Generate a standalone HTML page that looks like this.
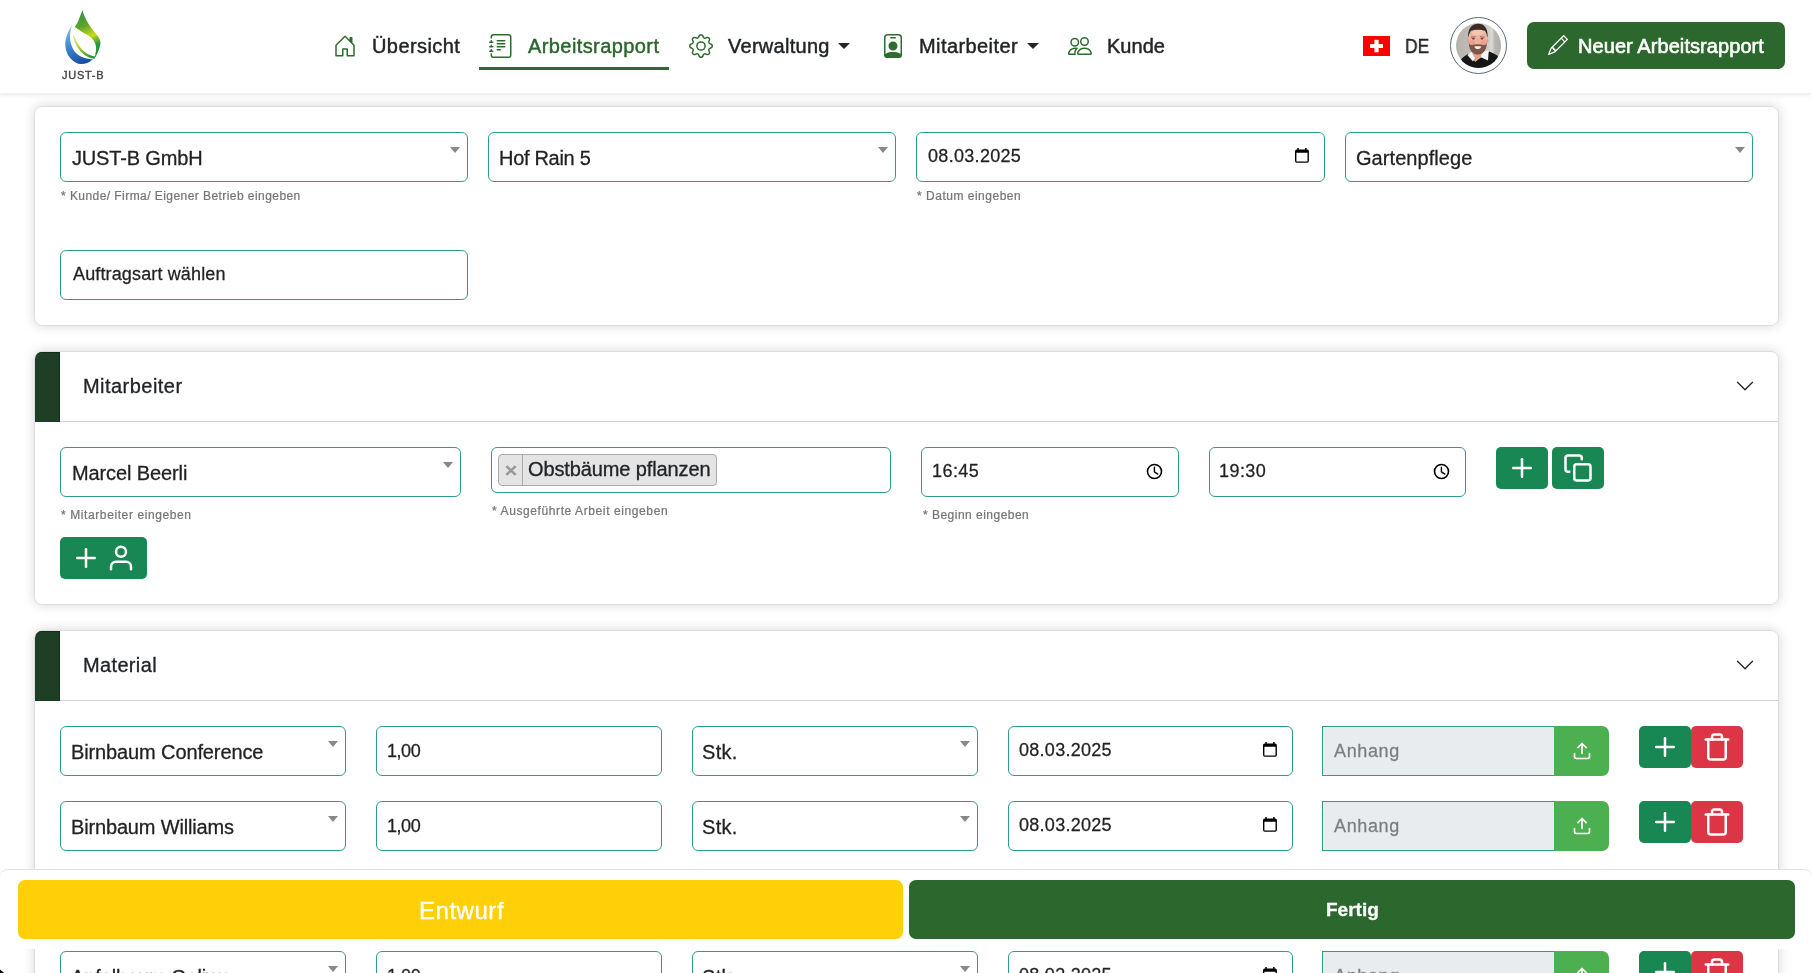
<!DOCTYPE html>
<html lang="de">
<head>
<meta charset="utf-8">
<title>Arbeitsrapport</title>
<style>
*{box-sizing:border-box;margin:0;padding:0}
html,body{width:1812px;height:973px;overflow:hidden;background:#fff}
body{position:relative;font-family:"Liberation Sans",sans-serif;color:#212529;font-size:20px}
.abs{position:absolute}
.t{position:absolute;white-space:nowrap;line-height:1;will-change:transform;-webkit-text-stroke:.016em}
svg{display:block}

/* header */
#hdr{position:absolute;left:0;top:0;width:1812px;height:93px;background:#fff;box-shadow:0 2px 5px rgba(0,0,0,.09);z-index:5}
.nico{position:absolute;top:34px;width:24px;height:24px;fill:#2e6b2e}
.nt{top:36px;font-size:20px;color:#222427;-webkit-text-stroke:.022em}
.caret{position:absolute;top:43px;width:0;height:0;border-top:6px solid #212529;border-left:6px solid transparent;border-right:6px solid transparent}
#ul{position:absolute;left:479px;top:67px;width:190px;height:3px;background:#2e6b2e}
#newbtn{position:absolute;left:1527px;top:22px;width:258px;height:47px;border-radius:7px;background:#2c672d}

/* cards */
.card{position:absolute;left:34px;width:1745px;background:#fff;border-radius:8px;box-shadow:0 0 12px rgba(0,0,0,.16)}
.card::after{content:"";position:absolute;inset:0;border:1px solid rgba(0,0,0,.135);border-radius:8px;pointer-events:none}
.chead{position:absolute;left:0;top:0;width:1745px;height:71px}
.chead::after{content:"";position:absolute;left:26px;right:1px;top:70px;height:1px;background:#d4d4d4}
.cbar{position:absolute;left:1px;top:1px;width:25px;height:70px;background:#1e3f25;border-radius:7px 0 0 0;box-shadow:inset -1px 1px 0 #10301a}
.ctitle{left:49px;top:26px;font-size:20px;color:#212529}
.chev{position:absolute;left:1701px;top:25px;width:20px;height:20px;fill:#212529}

.inp{position:absolute;height:50px;border:1px solid #2a9d8f;border-radius:6px;background:#fff}
.sel::after{content:"";position:absolute;right:7px;top:14px;width:0;height:0;border-top:6px solid #888;border-left:5px solid transparent;border-right:5px solid transparent}
.v20{left:11px;top:15px;font-size:20px;color:#222;-webkit-text-stroke:.014em}
.v18{left:11px;top:16px;font-size:18px;color:#222;-webkit-text-stroke:.014em}
.help{font-size:12px;color:#777;-webkit-text-stroke:.02em}
.cal{position:absolute;right:14.8px;top:15.4px;width:14px;height:15px}
.clk{position:absolute;right:15px;top:14.9px;width:17px;height:17px}

.gbtn{position:absolute;width:52px;height:42px;border-radius:5px;background:#198754}
.rbtn{position:absolute;width:52px;height:42px;border-radius:5px;background:#dc3545}
.fi{position:absolute;width:30px;height:30px;fill:none;stroke:#fff;stroke-width:2;stroke-linecap:round;stroke-linejoin:round}
.anh{position:absolute;width:232px;height:50px;border:1px solid #2a9d8f;border-right:0;background:#e9ecef}
.upl{position:absolute;width:55px;height:50px;background:#4caf50;border-radius:0 7px 7px 0}

/* footer bar */
#bar{position:absolute;left:0;top:869px;width:1812px;height:80px;background:#fff;border-top:1px solid #dee2e6;border-radius:8px 8px 0 0;z-index:6}
#draft{position:absolute;left:18px;top:10px;width:885px;height:59px;border-radius:7px;background:#ffcf08}
#done{position:absolute;left:909px;top:10px;width:886px;height:59px;border-radius:7px;background:#2c672d}
/*TUNE*/
#n1{letter-spacing:0.42px;margin-left:-0.4px;margin-top:0.0px;}
#n2{letter-spacing:0.41px;margin-left:-0.4px;margin-top:0.0px;}
#n3{letter-spacing:0.28px;margin-left:0.3px;margin-top:0.0px;}
#n4{letter-spacing:0.41px;margin-left:-0.5px;margin-top:0.0px;}
#n5{letter-spacing:0.03px;margin-left:-0.5px;margin-top:0.0px;}
#n7{letter-spacing:0.07px;margin-left:-0.3px;margin-top:0.0px;}
#tlogo{letter-spacing:0.73px;margin-left:0.9px;margin-top:0.0px;}
#v1{letter-spacing:-0.16px;margin-left:-0.4px;margin-top:0.0px;}
#h1{letter-spacing:0.44px;margin-left:0.7px;margin-top:0.0px;}
#v2{letter-spacing:-0.30px;margin-left:-0.6px;margin-top:0.0px;}
#v3{letter-spacing:0.31px;margin-left:-0.3px;margin-top:-2.0px;}
#h2{letter-spacing:0.51px;margin-left:1.4px;margin-top:0.0px;}
#v4{letter-spacing:0.06px;margin-left:-1.3px;margin-top:0.0px;}
#v5{letter-spacing:0.14px;margin-left:0.5px;margin-top:-2.0px;}
#ct1{letter-spacing:0.46px;margin-left:-0.2px;margin-top:-1.0px;}
#v6{letter-spacing:-0.11px;margin-left:-0.5px;margin-top:0.0px;}
#h3{letter-spacing:0.60px;margin-left:0.7px;margin-top:0.0px;}
#v7{letter-spacing:-0.12px;margin-left:0.7px;margin-top:-1.0px;}
#h4{letter-spacing:0.60px;margin-left:0.9px;margin-top:0.0px;}
#v8{letter-spacing:0.44px;margin-left:-0.7px;margin-top:-2.0px;}
#h5{letter-spacing:0.48px;margin-left:1.7px;margin-top:0.0px;}
#v9{letter-spacing:0.45px;margin-left:-1.9px;margin-top:-2.0px;}
#ct2{letter-spacing:0.35px;margin-left:-0.2px;margin-top:-1.0px;}
#m1a,#m3a,#m4a{letter-spacing:-0.12px;margin-left:-0.9px;margin-top:0.0px;}
#m2a{letter-spacing:-0.16px;margin-left:-0.9px;margin-top:0.0px;}
#m1b,#m2b,#m3b,#m4b{letter-spacing:-0.46px;margin-left:-0.7px;margin-top:-1.0px;}
#m1c,#m2c,#m3c,#m4c{letter-spacing:0.29px;margin-left:-1.9px;margin-top:0.0px;}
#m1d,#m2d,#m3d,#m4d{letter-spacing:0.28px;margin-left:-0.6px;margin-top:-2.0px;}
#m1e,#m2e,#m3e,#m4e{letter-spacing:0.62px;margin-left:0.4px;margin-top:-1.0px;}
#tdraft{letter-spacing:0.53px;margin-left:-0.4px;margin-top:1.0px;}
#tdone{letter-spacing:0.00px;margin-left:-0.3px;margin-top:0.0px;}
#n6{letter-spacing:0.00px;margin-left:-0.5px;margin-top:0.0px;transform:scaleX(.87);transform-origin:0 0;}
/*ENDTUNE*/
</style>
</head>
<body>

<!-- ================= HEADER ================= -->
<header id="hdr">
  <!-- logo -->
  <svg class="abs" id="logo" style="left:55px;top:5px" width="55" height="62" viewBox="55 5 55 62">
    <defs>
      <linearGradient id="lgG" gradientUnits="userSpaceOnUse" x1="80" y1="12" x2="99" y2="56">
        <stop offset="0" stop-color="#2f9442"/><stop offset=".3" stop-color="#5fa52c"/><stop offset=".55" stop-color="#c9db17"/><stop offset=".75" stop-color="#2d9a3a"/><stop offset="1" stop-color="#128a3a"/>
      </linearGradient>
      <linearGradient id="lgB" gradientUnits="userSpaceOnUse" x1="70" y1="26" x2="84" y2="64">
        <stop offset="0" stop-color="#7fc0ee"/><stop offset=".5" stop-color="#3c86cf"/><stop offset="1" stop-color="#164a9c"/>
      </linearGradient>
      <linearGradient id="lgL" gradientUnits="userSpaceOnUse" x1="73" y1="36" x2="94" y2="59">
        <stop offset="0" stop-color="#dfe87a"/><stop offset=".4" stop-color="#a9cc1f"/><stop offset="1" stop-color="#128a3a"/>
      </linearGradient>
    </defs>
    <path fill="url(#lgG)" d="M82.5 9.9C83.3 13 84 15 85 17.300C86.500 20.500 88 23.500 89.500 25.600C91.500 28.500 93.500 31 95.300 33C97.500 35.500 99 37.500 99.700 39.500C100.500 41.500 100.500 43.500 100.200 45C99.800 47.500 98.500 51 96.100 56L94.500 58.800C95 57 95.300 55.500 95.300 54.300C95.800 52 96.300 50 96.100 47.700C95.900 45.500 95.300 43.500 94.500 42C93.500 40 92 38.500 90.300 37.100C88.500 35.700 86.500 34.500 83.800 33C81.500 31.700 79.500 30.500 78 29.300C76.800 28.500 75.700 27.700 74.700 26.800C75.700 25.700 76.500 24.500 77.200 23.100C78.200 21.200 79 19.300 79.700 17.300C80.700 14.700 81.700 12.200 82.500 9.900Z"/>
    <path fill="url(#lgL)" d="M73 35.600C73.400 37.700 74 39.500 74.700 41.300C75.600 43.600 76.700 45.800 78 47.900C79.400 50 81 52 83 53.800C84.700 55.200 86.600 56.400 88.700 57.300C90.600 58.100 92.600 58.600 94.500 58.800L95.300 56.600C93.500 56.400 91.600 55.900 89.900 55.100C88 54.300 86.300 53.200 84.700 51.900C82.800 50.300 81.100 48.600 79.700 46.700C78.300 44.800 77.100 42.800 76.100 40.600C75.300 38.900 74.500 37.300 74 35.600Z"/>
    <path fill="url(#lgB)" d="M71.900 25.100C70.500 27.500 69.300 29.800 68.200 32.100C67.100 34.500 66.300 37 65.700 39.500C65.200 41.600 65 43.700 65.300 45.700C65.500 48.200 66 50.500 66.900 52.700C67.800 54.800 69 56.700 70.600 58.400C72 59.900 73.700 61.300 75.600 62.500C77.400 63.500 79.300 64 81.300 64C83.300 64 85.300 63.700 87.100 63C88.600 62.400 90 61.500 91.200 60.500C92 60.100 92.600 59.700 93.200 59.300C91.400 59.300 89.600 59.200 87.900 58.800C85.600 58.400 83.400 57.700 81.300 56.800C79.200 55.800 77.300 54.400 75.600 52.700C74 51 72.800 48.900 71.900 46.500C71 44.500 70.500 42.400 70.200 40.300C69.900 37.700 69.900 35.100 70.200 32.500C70.500 30 71.100 27.500 71.900 25.100Z"/>
  </svg>
  <div class="t" id="tlogo" style="left:61px;top:69.500px;font-size:11px;color:#444;-webkit-text-stroke:.035em">JUST-B</div>

  <!-- nav -->
  <svg class="nico" style="left:332.500px" viewBox="0 0 16 16"><path d="M8.354 1.146a.5.5 0 0 0-.708 0l-6 6A.5.5 0 0 0 1.500 7.500v7a.5.5 0 0 0 .5.5h4.500a.5.5 0 0 0 .5-.5v-4h2v4a.5.5 0 0 0 .5.5H14a.5.5 0 0 0 .5-.5v-7a.5.5 0 0 0-.146-.354L13 5.793V2.500a.5.5 0 0 0-.5-.5h-1a.5.5 0 0 0-.5.5v1.293L8.354 1.146ZM2.500 14V7.707l5.500-5.500 5.500 5.500V14H10v-4a.5.5 0 0 0-.5-.5h-3a.5.5 0 0 0-.5.5v4H2.500Z"/></svg>
  <div class="t nt" id="n1" style="left:372px">Übersicht</div>

  <svg class="nico" style="left:489px" viewBox="0 0 16 16"><path d="M5 10.500a.5.5 0 0 1 .5-.5h2a.5.5 0 0 1 0 1h-2a.5.5 0 0 1-.5-.5zm0-2a.5.5 0 0 1 .5-.5h5a.5.5 0 0 1 0 1h-5a.5.5 0 0 1-.5-.5zm0-2a.5.5 0 0 1 .5-.5h5a.5.5 0 0 1 0 1h-5a.5.5 0 0 1-.5-.5zm0-2a.5.5 0 0 1 .5-.5h5a.5.5 0 0 1 0 1h-5a.5.5 0 0 1-.5-.5z"/><path d="M3 0h10a2 2 0 0 1 2 2v12a2 2 0 0 1-2 2H3a2 2 0 0 1-2-2v-1h1v1a1 1 0 0 0 1 1h10a1 1 0 0 0 1-1V2a1 1 0 0 0-1-1H3a1 1 0 0 0-1 1v1H1V2a2 2 0 0 1 2-2z"/><path d="M1 5v-.5a.5.5 0 0 1 1 0V5h.5a.5.5 0 0 1 0 1h-2a.5.5 0 0 1 0-1H1zm0 3v-.5a.5.5 0 0 1 1 0V8h.5a.5.5 0 0 1 0 1h-2a.5.5 0 0 1 0-1H1zm0 3v-.5a.5.5 0 0 1 1 0v.5h.5a.5.5 0 0 1 0 1h-2a.5.5 0 0 1 0-1H1z"/></svg>
  <div class="t nt" id="n2" style="left:528px;color:#29652b">Arbeitsrapport</div>
  <div id="ul"></div>

  <svg class="nico" style="left:689px" viewBox="0 0 16 16"><path d="M8 4.754a3.246 3.246 0 1 0 0 6.492 3.246 3.246 0 0 0 0-6.492zM5.754 8a2.246 2.246 0 1 1 4.492 0 2.246 2.246 0 0 1-4.492 0z"/><path d="M9.796 1.343c-.527-1.790-3.065-1.790-3.592 0l-.094.319a.873.873 0 0 1-1.255.520l-.292-.160c-1.640-.892-3.433.902-2.540 2.541l.159.292a.873.873 0 0 1-.520 1.255l-.319.094c-1.790.527-1.790 3.065 0 3.592l.319.094a.873.873 0 0 1 .520 1.255l-.160.292c-.892 1.640.901 3.434 2.541 2.540l.292-.159a.873.873 0 0 1 1.255.520l.094.319c.527 1.790 3.065 1.790 3.592 0l.094-.319a.873.873 0 0 1 1.255-.520l.292.160c1.640.893 3.434-.902 2.540-2.541l-.159-.292a.873.873 0 0 1 .520-1.255l.319-.094c1.790-.527 1.790-3.065 0-3.592l-.319-.094a.873.873 0 0 1-.520-1.255l.160-.292c.893-1.640-.902-3.433-2.541-2.540l-.292.159a.873.873 0 0 1-1.255-.520l-.094-.319zm-2.633.283c.246-.835 1.428-.835 1.674 0l.094.319a1.873 1.873 0 0 0 2.693 1.115l.291-.160c.764-.415 1.600.420 1.184 1.185l-.159.292a1.873 1.873 0 0 0 1.116 2.692l.318.094c.835.246.835 1.428 0 1.674l-.319.094a1.873 1.873 0 0 0-1.115 2.693l.160.291c.415.764-.420 1.600-1.185 1.184l-.291-.159a1.873 1.873 0 0 0-2.693 1.116l-.094.318c-.246.835-1.428.835-1.674 0l-.094-.319a1.873 1.873 0 0 0-2.692-1.115l-.292.160c-.764.415-1.600-.420-1.184-1.185l.159-.291A1.873 1.873 0 0 0 1.945 8.930l-.319-.094c-.835-.246-.835-1.428 0-1.674l.319-.094A1.873 1.873 0 0 0 3.060 4.377l-.160-.292c-.415-.764.420-1.600 1.185-1.184l.292.159a1.873 1.873 0 0 0 2.692-1.115l.094-.319z"/></svg>
  <div class="t nt" id="n3" style="left:728px">Verwaltung</div>
  <div class="caret" style="left:838px"></div>

  <svg class="nico" style="left:880.500px" viewBox="0 0 16 16"><path d="M6.500 2a.5.5 0 0 0 0 1h3a.5.5 0 0 0 0-1h-3zM11 8a3 3 0 1 1-6 0 3 3 0 0 1 6 0z"/><path d="M4.500 0A2.500 2.500 0 0 0 2 2.500V14a2 2 0 0 0 2 2h8a2 2 0 0 0 2-2V2.500A2.500 2.500 0 0 0 11.500 0h-7zM3 2.500A1.500 1.500 0 0 1 4.500 1h7A1.500 1.500 0 0 1 13 2.500v10.795a4.200 4.200 0 0 0-.776-.492C11.392 12.387 10.063 12 8 12s-3.392.387-4.224.803a4.200 4.200 0 0 0-.776.492V2.500z"/></svg>
  <div class="t nt" id="n4" style="left:919.500px">Mitarbeiter</div>
  <div class="caret" style="left:1027px"></div>

  <svg class="nico" style="left:1068px" viewBox="0 0 16 16"><path d="M15 14s1 0 1-1-1-4-5-4-5 3-5 4 1 1 1 1h8Zm-7.978-1A.261.261 0 0 1 7 12.996c.001-.264.167-1.030.760-1.720C8.312 10.629 9.282 10 11 10c1.717 0 2.687.630 3.240 1.276.593.690.758 1.457.760 1.720l-.8.002a.274.274 0 0 1-.14.002H7.022ZM11 7a2 2 0 1 0 0-4 2 2 0 0 0 0 4Zm3-2a3 3 0 1 1-6 0 3 3 0 0 1 6 0ZM6.936 9.280a5.880 5.880 0 0 0-1.230-.247A7.350 7.350 0 0 0 5 9c-4 0-5 3-5 4 0 .667.333 1 1 1h4.216A2.238 2.238 0 0 1 5 13c0-1.010.377-2.042 1.090-2.904.243-.294.526-.569.846-.816ZM4.920 10A5.493 5.493 0 0 0 4 13H1c0-.260.164-1.030.760-1.724.545-.636 1.492-1.256 3.160-1.275ZM1.500 5.500a3 3 0 1 1 6 0 3 3 0 0 1-6 0Zm3-2a2 2 0 1 0 0 4 2 2 0 0 0 0-4Z"/></svg>
  <div class="t nt" id="n5" style="left:1107.500px">Kunde</div>

  <!-- flag -->
  <svg class="abs" style="left:1363px;top:36px" width="27" height="20" viewBox="0 0 27 20"><rect width="27" height="20" fill="#ff0000"/><rect x="7" y="8.100" width="13" height="3.900" fill="#fff"/><rect x="11.400" y="3.800" width="4.200" height="12.500" fill="#fff"/></svg>
  <div class="t nt" id="n6" style="left:1405.500px">DE</div>

  <!-- avatar placeholder -->
  <div id="avatar" class="abs" style="left:1450px;top:16.800px;width:57px;height:57px;border-radius:50%;border:1.300px solid #5b6b78">
    <svg class="abs" style="left:4.700px;top:5.100px" width="45" height="45" viewBox="0 0 45 45">
      <defs>
        <clipPath id="avc"><circle cx="22.500" cy="22.500" r="22.500"/></clipPath>
        <filter id="avb" x="-10%" y="-10%" width="120%" height="120%"><feGaussianBlur stdDeviation=".7"/></filter>
        <linearGradient id="avbg" x1="0" y1="0" x2="1" y2="0"><stop offset="0" stop-color="#b4b3ad"/><stop offset=".55" stop-color="#c4c3be"/><stop offset=".72" stop-color="#cfcec9"/><stop offset=".8" stop-color="#dad9d5"/><stop offset=".86" stop-color="#b9b8b3"/><stop offset="1" stop-color="#adaca7"/></linearGradient>
      </defs>
      <g clip-path="url(#avc)">
        <rect width="45" height="45" fill="url(#avbg)"/>
        <g filter="url(#avb)">
          <!-- sweater -->
          <path d="M3 39C5 35.500 8 33.500 12 31L19.300 38.700L26 33L33.300 28.400C37 30 40.500 31.500 43.500 34V46H3Z" fill="#141414"/>
          <!-- neck -->
          <path d="M17 29L26.500 29L25 34.500L19.300 38.700L16.500 33Z" fill="#e0a08c"/>
          <!-- collar -->
          <path d="M11.500 32.300L15.400 28.800L19 35L17 38.600Z" fill="#f4f2f2"/>
          <path d="M26.500 28.200L32.800 27.600L32 37.600L24.800 34.200Z" fill="#f4f2f2"/>
          <!-- ears -->
          <ellipse cx="12.600" cy="17.500" rx="1.300" ry="2.300" fill="#e39a8a"/>
          <ellipse cx="31.200" cy="17.800" rx="1.300" ry="2.300" fill="#e39a8a"/>
          <!-- face -->
          <ellipse cx="21.800" cy="16.800" rx="9.300" ry="12.200" fill="#efb09c"/>
          <ellipse cx="16" cy="19.500" rx="3" ry="2.600" fill="#ee8f8a" opacity=".55"/>
          <ellipse cx="27.800" cy="19.500" rx="3" ry="2.600" fill="#ee8f8a" opacity=".55"/>
          <ellipse cx="21.800" cy="9.500" rx="6" ry="3" fill="#f6c9b4" opacity=".8"/>
          <!-- beard -->
          <path d="M12.800 19.500C13.500 22 15 22.500 17 21.800C19 21 24.500 21 26.500 21.800C28.500 22.500 30.200 22 30.900 19.500C31 24 29.500 28 26.500 30.200C23.500 32 20 32 17.300 30.200C14.200 28 12.700 24 12.800 19.500Z" fill="#7b5646"/>
          <!-- mouth -->
          <path d="M18.300 23.600C20.300 23.200 23.400 23.200 25.300 23.600C24.700 25.500 23.200 26.100 21.800 26.100C20.400 26.100 18.900 25.500 18.300 23.600Z" fill="#f7efea"/>
          <!-- hair -->
          <path d="M12.300 14.500C11.500 8 14 1.500 21.500 .8C29.500 .5 32.300 7 31.500 15C30.800 12 30.300 9.500 29 7.800C26 6.300 18 6.300 15 7.800C13.500 9.500 13 12 12.300 14.500Z" fill="#3a2b25"/>
          <!-- eyes/brows -->
          <ellipse cx="17.400" cy="15.800" rx="1.500" ry=".8" fill="#4a3a3a"/>
          <ellipse cx="26" cy="15.800" rx="1.500" ry=".8" fill="#4a3a3a"/>
          <path d="M15 14.200L19.500 13.800M24 13.800L28.500 14.200" stroke="#6a4a40" stroke-width=".8"/>
        </g>
      </g>
    </svg>
  </div>

  <div id="newbtn">
    <svg class="abs" style="left:20.500px;top:13px;fill:#fff" width="20" height="20" viewBox="0 0 16 16"><path d="M12.146.146a.5.5 0 0 1 .708 0l3 3a.5.5 0 0 1 0 .708l-10 10a.5.5 0 0 1-.168.110l-5 2a.5.5 0 0 1-.650-.650l2-5a.5.5 0 0 1 .110-.168l10-10zM11.207 2.500 13.500 4.793 14.793 3.500 12.500 1.207 11.207 2.500zm1.586 3L10.500 3.207 4 9.707V10h.5a.5.5 0 0 1 .5.5v.5h.5a.5.5 0 0 1 .5.5v.5h.293l6.500-6.500zm-9.761 5.175-.106.106-1.528 3.821 3.821-1.528.106-.106A.5.5 0 0 1 5 12.500V12h-.5a.5.5 0 0 1-.5-.5V11h-.5a.5.5 0 0 1-.468-.325z"/></svg>
    <div class="t" id="n7" style="left:51.500px;top:14px;font-size:20px;color:#fff;-webkit-text-stroke:.03em">Neuer Arbeitsrapport</div>
  </div>
</header>

<!-- ================= CARD 1 ================= -->
<section class="card" id="c1" style="top:106px;height:220px">
  <div class="inp sel" style="left:26px;top:26px;width:408px"><div class="t v20" id="v1">JUST-B GmbH</div></div>
  <div class="t help" id="h1" style="left:26px;top:84px">* Kunde/ Firma/ Eigener Betrieb eingeben</div>
  <div class="inp sel" style="left:454px;top:26px;width:408px"><div class="t v20" id="v2">Hof Rain 5</div></div>
  <div class="inp" style="left:882px;top:26px;width:409px"><div class="t v18" id="v3">08.03.2025</div><svg class="cal" viewBox="0 0 14 15"><rect x="2.300" y="0" width="1.500" height="2.200"/><rect x="10.100" y="0" width="1.500" height="2.200"/><path fill-rule="evenodd" d="M1.700 1.500h10.500a1.700 1.700 0 0 1 1.700 1.700v9.800a1.700 1.700 0 0 1-1.700 1.700H1.700A1.700 1.700 0 0 1 0 13V3.200a1.700 1.700 0 0 1 1.700-1.700zM1.400 4.800v8.100a.5.500 0 0 0 .5.500h10.100a.5.500 0 0 0 .5-.5V4.800z"/></svg></div>
  <div class="t help" id="h2" style="left:882px;top:84px">* Datum eingeben</div>
  <div class="inp sel" style="left:1311px;top:26px;width:408px"><div class="t v20" id="v4">Gartenpflege</div></div>
  <div class="inp" style="left:26px;top:144px;width:408px"><div class="t v18" id="v5">Auftragsart wählen</div></div>
</section>

<!-- ================= CARD 2 ================= -->
<section class="card" id="c2" style="top:351px;height:254px">
  <div class="chead"><div class="cbar"></div><div class="t ctitle" id="ct1">Mitarbeiter</div><svg class="chev" viewBox="0 0 16 16"><path fill-rule="evenodd" d="M1.646 4.646a.5.500 0 0 1 .708 0L8 10.293l5.646-5.647a.5.500 0 0 1 .708.708l-6 6a.5.500 0 0 1-.708 0l-6-6a.5.500 0 0 1 0-.708z"/></svg></div>
  <div class="inp sel" style="left:26px;top:96px;width:401px"><div class="t v20" id="v6">Marcel Beerli</div></div>
  <div class="t help" id="h3" style="left:26px;top:158px">* Mitarbeiter eingeben</div>
  <div class="inp" style="left:457px;top:96px;width:400px;height:46px">
    <div class="abs" id="tag" style="left:6px;top:6px;width:219px;height:32px;background:#e4e4e4;border:1px solid #aaa;border-radius:4px">
      <svg class="abs" style="left:5.700px;top:10.200px" width="12" height="11" viewBox="0 0 12 11"><path d="M1.300 1.100L10.700 9.900M10.700 1.100L1.300 9.900" stroke="#999" stroke-width="2.600" fill="none"/></svg>
      <div class="abs" style="left:23px;top:0;width:1px;height:30px;background:#aaa"></div>
      <div class="t" id="v7" style="left:28.500px;top:5px;font-size:20px;color:#212529">Obstbäume pflanzen</div>
    </div>
  </div>
  <div class="t help" id="h4" style="left:457px;top:154px">* Ausgeführte Arbeit eingeben</div>
  <div class="inp" style="left:887px;top:96px;width:258px"><div class="t v18" id="v8">16:45</div><svg class="clk" viewBox="0 0 17 17" fill="none" stroke="#000"><circle cx="8.500" cy="8.500" r="7" stroke-width="1.600"/><path d="M8.400 4.200V8.800L11.800 11.100" stroke-width="1.400" stroke-linecap="round" stroke-linejoin="round"/></svg></div>
  <div class="t help" id="h5" style="left:887px;top:158px">* Beginn eingeben</div>
  <div class="inp" style="left:1175px;top:96px;width:257px"><div class="t v18" id="v9">19:30</div><svg class="clk" viewBox="0 0 17 17" fill="none" stroke="#000"><circle cx="8.500" cy="8.500" r="7" stroke-width="1.600"/><path d="M8.400 4.200V8.800L11.800 11.100" stroke-width="1.400" stroke-linecap="round" stroke-linejoin="round"/></svg></div>
  <div class="gbtn" style="left:1462px;top:96px"><svg class="fi" style="left:11px;top:6px" viewBox="0 0 24 24"><line x1="12" y1="5" x2="12" y2="19"/><line x1="5" y1="12" x2="19" y2="12"/></svg></div>
  <div class="gbtn" style="left:1518px;top:96px"><svg class="fi" style="left:11px;top:6px" viewBox="0 0 24 24"><rect x="9" y="9" width="13" height="13" rx="2" ry="2"/><path d="M5 15H4a2 2 0 0 1-2-2V4a2 2 0 0 1 2-2h9a2 2 0 0 1 2 2v1"/></svg></div>
  <div class="gbtn" style="left:26px;top:186px;width:87px"><svg class="fi" style="left:11px;top:6px" viewBox="0 0 24 24"><line x1="12" y1="5" x2="12" y2="19"/><line x1="5" y1="12" x2="19" y2="12"/></svg><svg class="fi" style="left:46px;top:6px" viewBox="0 0 24 24"><path d="M20 21v-2a4 4 0 0 0-4-4H8a4 4 0 0 0-4 4v2"/><circle cx="12" cy="7" r="4"/></svg></div>
</section>

<!-- ================= CARD 3 ================= -->
<section class="card" id="c3" style="top:630px;height:420px">
  <div class="chead"><div class="cbar"></div><div class="t ctitle" id="ct2">Material</div><svg class="chev" viewBox="0 0 16 16"><path fill-rule="evenodd" d="M1.646 4.646a.5.500 0 0 1 .708 0L8 10.293l5.646-5.647a.5.500 0 0 1 .708.708l-6 6a.5.500 0 0 1-.708 0l-6-6a.5.500 0 0 1 0-.708z"/></svg></div>

  <div class="inp sel" style="left:26px;top:96px;width:286px"><div class="t v20" id="m1a">Birnbaum Conference</div></div>
  <div class="inp" style="left:342px;top:96px;width:286px"><div class="t v18" id="m1b">1,00</div></div>
  <div class="inp sel" style="left:658px;top:96px;width:286px"><div class="t v20" id="m1c">Stk.</div></div>
  <div class="inp" style="left:974px;top:96px;width:285px"><div class="t v18" id="m1d">08.03.2025</div><svg class="cal" viewBox="0 0 14 15"><rect x="2.300" y="0" width="1.500" height="2.200"/><rect x="10.100" y="0" width="1.500" height="2.200"/><path fill-rule="evenodd" d="M1.700 1.500h10.500a1.700 1.700 0 0 1 1.700 1.700v9.800a1.700 1.700 0 0 1-1.700 1.700H1.700A1.700 1.700 0 0 1 0 13V3.200a1.700 1.700 0 0 1 1.700-1.700zM1.400 4.800v8.100a.5.500 0 0 0 .5.500h10.100a.5.500 0 0 0 .5-.5V4.800z"/></svg></div>
  <div class="anh" style="left:1288px;top:96px"><div class="t v18" id="m1e" style="color:#7d7d7d;-webkit-text-stroke:.015em">Anhang</div></div>
  <div class="upl" style="left:1520px;top:96px"><svg class="abs" style="left:17.500px;top:15px;fill:none;stroke:#fff;stroke-width:2;stroke-linecap:round;stroke-linejoin:round" width="20" height="20" viewBox="0 0 24 24"><path d="M21 15v4a2 2 0 0 1-2 2H5a2 2 0 0 1-2-2v-4"/><polyline points="17 8 12 3 7 8"/><line x1="12" y1="3" x2="12" y2="15"/></svg></div>
  <div class="gbtn" style="left:1605px;top:96px"><svg class="fi" style="left:11px;top:6px" viewBox="0 0 24 24"><line x1="12" y1="5" x2="12" y2="19"/><line x1="5" y1="12" x2="19" y2="12"/></svg></div>
  <div class="rbtn" style="left:1657px;top:96px"><svg class="fi" style="left:11px;top:6px" viewBox="0 0 24 24"><polyline points="3 6 5 6 21 6"/><path d="M19 6v14a2 2 0 0 1-2 2H7a2 2 0 0 1-2-2V6m3 0V4a2 2 0 0 1 2-2h4a2 2 0 0 1 2 2v2"/></svg></div>

  <div class="inp sel" style="left:26px;top:171px;width:286px"><div class="t v20" id="m2a">Birnbaum Williams</div></div>
  <div class="inp" style="left:342px;top:171px;width:286px"><div class="t v18" id="m2b">1,00</div></div>
  <div class="inp sel" style="left:658px;top:171px;width:286px"><div class="t v20" id="m2c">Stk.</div></div>
  <div class="inp" style="left:974px;top:171px;width:285px"><div class="t v18" id="m2d">08.03.2025</div><svg class="cal" viewBox="0 0 14 15"><rect x="2.300" y="0" width="1.500" height="2.200"/><rect x="10.100" y="0" width="1.500" height="2.200"/><path fill-rule="evenodd" d="M1.700 1.500h10.500a1.700 1.700 0 0 1 1.700 1.700v9.800a1.700 1.700 0 0 1-1.700 1.700H1.700A1.700 1.700 0 0 1 0 13V3.200a1.700 1.700 0 0 1 1.700-1.700zM1.400 4.800v8.100a.5.500 0 0 0 .5.500h10.100a.5.500 0 0 0 .5-.5V4.800z"/></svg></div>
  <div class="anh" style="left:1288px;top:171px"><div class="t v18" id="m2e" style="color:#7d7d7d;-webkit-text-stroke:.015em">Anhang</div></div>
  <div class="upl" style="left:1520px;top:171px"><svg class="abs" style="left:17.500px;top:15px;fill:none;stroke:#fff;stroke-width:2;stroke-linecap:round;stroke-linejoin:round" width="20" height="20" viewBox="0 0 24 24"><path d="M21 15v4a2 2 0 0 1-2 2H5a2 2 0 0 1-2-2v-4"/><polyline points="17 8 12 3 7 8"/><line x1="12" y1="3" x2="12" y2="15"/></svg></div>
  <div class="gbtn" style="left:1605px;top:171px"><svg class="fi" style="left:11px;top:6px" viewBox="0 0 24 24"><line x1="12" y1="5" x2="12" y2="19"/><line x1="5" y1="12" x2="19" y2="12"/></svg></div>
  <div class="rbtn" style="left:1657px;top:171px"><svg class="fi" style="left:11px;top:6px" viewBox="0 0 24 24"><polyline points="3 6 5 6 21 6"/><path d="M19 6v14a2 2 0 0 1-2 2H7a2 2 0 0 1-2-2V6m3 0V4a2 2 0 0 1 2-2h4a2 2 0 0 1 2 2v2"/></svg></div>

  <div class="inp sel" style="left:26px;top:246px;width:286px"><div class="t v20" id="m3a">Apfelbaum Gala</div></div>
  <div class="inp" style="left:342px;top:246px;width:286px"><div class="t v18" id="m3b">1,00</div></div>
  <div class="inp sel" style="left:658px;top:246px;width:286px"><div class="t v20" id="m3c">Stk.</div></div>
  <div class="inp" style="left:974px;top:246px;width:285px"><div class="t v18" id="m3d">08.03.2025</div><svg class="cal" viewBox="0 0 14 15"><rect x="2.300" y="0" width="1.500" height="2.200"/><rect x="10.100" y="0" width="1.500" height="2.200"/><path fill-rule="evenodd" d="M1.700 1.500h10.500a1.700 1.700 0 0 1 1.700 1.700v9.800a1.700 1.700 0 0 1-1.700 1.700H1.700A1.700 1.700 0 0 1 0 13V3.200a1.700 1.700 0 0 1 1.700-1.700zM1.400 4.800v8.100a.5.500 0 0 0 .5.500h10.100a.5.500 0 0 0 .5-.5V4.800z"/></svg></div>
  <div class="anh" style="left:1288px;top:246px"><div class="t v18" id="m3e" style="color:#7d7d7d;-webkit-text-stroke:.015em">Anhang</div></div>
  <div class="upl" style="left:1520px;top:246px"><svg class="abs" style="left:17.500px;top:15px;fill:none;stroke:#fff;stroke-width:2;stroke-linecap:round;stroke-linejoin:round" width="20" height="20" viewBox="0 0 24 24"><path d="M21 15v4a2 2 0 0 1-2 2H5a2 2 0 0 1-2-2v-4"/><polyline points="17 8 12 3 7 8"/><line x1="12" y1="3" x2="12" y2="15"/></svg></div>
  <div class="gbtn" style="left:1605px;top:246px"><svg class="fi" style="left:11px;top:6px" viewBox="0 0 24 24"><line x1="12" y1="5" x2="12" y2="19"/><line x1="5" y1="12" x2="19" y2="12"/></svg></div>
  <div class="rbtn" style="left:1657px;top:246px"><svg class="fi" style="left:11px;top:6px" viewBox="0 0 24 24"><polyline points="3 6 5 6 21 6"/><path d="M19 6v14a2 2 0 0 1-2 2H7a2 2 0 0 1-2-2V6m3 0V4a2 2 0 0 1 2-2h4a2 2 0 0 1 2 2v2"/></svg></div>

  <div class="inp sel" style="left:26px;top:321px;width:286px"><div class="t v20" id="m4a">Apfelbaum Galiwa</div></div>
  <div class="inp" style="left:342px;top:321px;width:286px"><div class="t v18" id="m4b">1,00</div></div>
  <div class="inp sel" style="left:658px;top:321px;width:286px"><div class="t v20" id="m4c">Stk.</div></div>
  <div class="inp" style="left:974px;top:321px;width:285px"><div class="t v18" id="m4d">08.03.2025</div><svg class="cal" viewBox="0 0 14 15"><rect x="2.300" y="0" width="1.500" height="2.200"/><rect x="10.100" y="0" width="1.500" height="2.200"/><path fill-rule="evenodd" d="M1.700 1.500h10.500a1.700 1.700 0 0 1 1.700 1.700v9.800a1.700 1.700 0 0 1-1.700 1.700H1.700A1.700 1.700 0 0 1 0 13V3.200a1.700 1.700 0 0 1 1.700-1.700zM1.400 4.800v8.100a.5.500 0 0 0 .5.500h10.100a.5.500 0 0 0 .5-.5V4.800z"/></svg></div>
  <div class="anh" style="left:1288px;top:321px"><div class="t v18" id="m4e" style="color:#7d7d7d;-webkit-text-stroke:.015em">Anhang</div></div>
  <div class="upl" style="left:1520px;top:321px"><svg class="abs" style="left:17.500px;top:15px;fill:none;stroke:#fff;stroke-width:2;stroke-linecap:round;stroke-linejoin:round" width="20" height="20" viewBox="0 0 24 24"><path d="M21 15v4a2 2 0 0 1-2 2H5a2 2 0 0 1-2-2v-4"/><polyline points="17 8 12 3 7 8"/><line x1="12" y1="3" x2="12" y2="15"/></svg></div>
  <div class="gbtn" style="left:1605px;top:321px"><svg class="fi" style="left:11px;top:6px" viewBox="0 0 24 24"><line x1="12" y1="5" x2="12" y2="19"/><line x1="5" y1="12" x2="19" y2="12"/></svg></div>
  <div class="rbtn" style="left:1657px;top:321px"><svg class="fi" style="left:11px;top:6px" viewBox="0 0 24 24"><polyline points="3 6 5 6 21 6"/><path d="M19 6v14a2 2 0 0 1-2 2H7a2 2 0 0 1-2-2V6m3 0V4a2 2 0 0 1 2-2h4a2 2 0 0 1 2 2v2"/></svg></div>
</section>

<svg class="abs" style="left:0;top:969px;z-index:1" width="5" height="4" viewBox="0 0 5 4"><path d="M0 .5L4 4H0Z" fill="#0a0014"/></svg>

<!-- ================= FOOTER BAR ================= -->
<footer id="bar">
  <div id="draft"><div class="t" id="tdraft" style="left:401px;top:18px;font-size:24px;color:#fff">Entwurf</div></div>
  <div id="done"><div class="t" id="tdone" style="left:417px;top:20px;font-size:19px;font-weight:bold;color:#fff">Fertig</div></div>
</footer>

</body>
</html>
